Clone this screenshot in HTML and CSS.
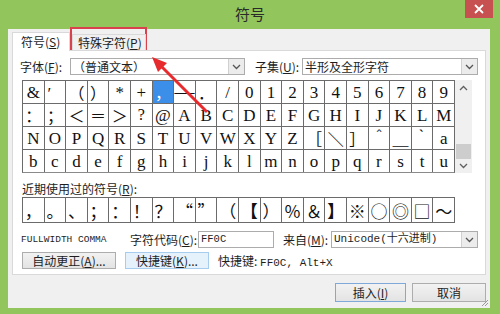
FILE: index.html
```html
<!DOCTYPE html>
<html lang="zh-CN">
<head>
    <meta charset="UTF-8">
    <meta name="viewport" content="width=device-width, initial-scale=1.0">
    <title>符号</title>
    <link rel="stylesheet" href="styles.css">
</head>
<body>
<div class="window">
    <div class="titlebar">
        <span></span>
        <span class="title">符号</span>
        <div class="close">
            <svg width="10" height="10" viewBox="0 0 10 10"><path d="M1 1L9 9M9 1L1 9" stroke="#fff" stroke-width="1.8"/></svg>
        </div>
    </div>

    <div class="dialog">
        <div class="tabs">
            <div class="tab active">符号(<u>S</u>)</div>
            <div class="tab">特殊字符(<u>P</u>)</div>
        </div>

        <div class="tab-panel">
            <div class="font-row">
                <span class="label font-label">字体(<u>F</u>):</span>
                <div class="select font-select">
                    <span class="select-text">（普通文本）</span>
                    <span class="drop"><svg width="9" height="6" viewBox="0 0 9 6"><path d="M1 1L4.5 4.5L8 1" fill="none" stroke="#555" stroke-width="1.3"/></svg></span>
                </div>
                <span class="label subset-label">子集(<u>U</u>):</span>
                <div class="select subset-select">
                    <span class="select-text">半形及全形字符</span>
                    <span class="drop"><svg width="9" height="6" viewBox="0 0 9 6"><path d="M1 1L4.5 4.5L8 1" fill="none" stroke="#555" stroke-width="1.3"/></svg></span>
                </div>
            </div>

            <div class="char-area">
                <div class="char-grid">
                    <div class="cell">&amp;</div>
                    <div class="cell l top">′</div>
                    <div class="cell cjk">（</div>
                    <div class="cell cjk">）</div>
                    <div class="cell">*</div>
                    <div class="cell">+</div>
                    <div class="cell cjk selected">，</div>
                    <div class="cell dash">—</div>
                    <div class="cell cjk">．</div>
                    <div class="cell">/</div>
                    <div class="cell">0</div>
                    <div class="cell">1</div>
                    <div class="cell">2</div>
                    <div class="cell">3</div>
                    <div class="cell">4</div>
                    <div class="cell">5</div>
                    <div class="cell">6</div>
                    <div class="cell">7</div>
                    <div class="cell">8</div>
                    <div class="cell">9</div>

                    <div class="cell cjk">：</div>
                    <div class="cell cjk">；</div>
                    <div class="cell cjk">＜</div>
                    <div class="cell cjk">＝</div>
                    <div class="cell cjk">＞</div>
                    <div class="cell small">?</div>
                    <div class="cell">@</div>
                    <div class="cell">A</div>
                    <div class="cell">B</div>
                    <div class="cell">C</div>
                    <div class="cell">D</div>
                    <div class="cell">E</div>
                    <div class="cell">F</div>
                    <div class="cell">G</div>
                    <div class="cell">H</div>
                    <div class="cell">I</div>
                    <div class="cell">J</div>
                    <div class="cell">K</div>
                    <div class="cell">L</div>
                    <div class="cell">M</div>

                    <div class="cell">N</div>
                    <div class="cell">O</div>
                    <div class="cell">P</div>
                    <div class="cell">Q</div>
                    <div class="cell">R</div>
                    <div class="cell">S</div>
                    <div class="cell">T</div>
                    <div class="cell">U</div>
                    <div class="cell">V</div>
                    <div class="cell">W</div>
                    <div class="cell">X</div>
                    <div class="cell">Y</div>
                    <div class="cell">Z</div>
                    <div class="cell cjk">［</div>
                    <div class="cell cjk">＼</div>
                    <div class="cell cjk">］</div>
                    <div class="cell cjk">＾</div>
                    <div class="cell cjk">＿</div>
                    <div class="cell cjk">｀</div>
                    <div class="cell">a</div>

                    <div class="cell">b</div>
                    <div class="cell">c</div>
                    <div class="cell">d</div>
                    <div class="cell">e</div>
                    <div class="cell">f</div>
                    <div class="cell">g</div>
                    <div class="cell">h</div>
                    <div class="cell">i</div>
                    <div class="cell">j</div>
                    <div class="cell">k</div>
                    <div class="cell">l</div>
                    <div class="cell">m</div>
                    <div class="cell">n</div>
                    <div class="cell">o</div>
                    <div class="cell">p</div>
                    <div class="cell">q</div>
                    <div class="cell">r</div>
                    <div class="cell">s</div>
                    <div class="cell">t</div>
                    <div class="cell">u</div>
                </div>
                <div class="scrollbar">
                    <svg width="9" height="6" viewBox="0 0 9 6"><path d="M1 5L4.5 1.5L8 5" fill="none" stroke="#606060" stroke-width="1.3"/></svg>
                    <div class="thumb"></div>
                    <svg width="9" height="6" viewBox="0 0 9 6"><path d="M1 1L4.5 4.5L8 1" fill="none" stroke="#606060" stroke-width="1.3"/></svg>
                </div>
            </div>

            <div class="recent-label">近期使用过的符号(<u>R</u>):</div>
            <div class="recent-grid">
                <div class="cell cjk">，</div>
                <div class="cell cjk">。</div>
                <div class="cell cjk">、</div>
                <div class="cell cjk">；</div>
                <div class="cell cjk">：</div>
                <div class="cell cjk">！</div>
                <div class="cell cjk">？</div>
                <div class="cell cjk">“</div>
                <div class="cell cjk">”</div>
                <div class="cell cjk">（</div>
                <div class="cell cjk bold">【</div>
                <div class="cell cjk">）</div>
                <div class="cell cjk">％</div>
                <div class="cell cjk">＆</div>
                <div class="cell cjk bold">】</div>
                <div class="cell cjk">※</div>
                <div class="cell cjk">○</div>
                <div class="cell cjk">◎</div>
                <div class="cell cjk">□</div>
                <div class="cell cjk">～</div>
            </div>

            <div class="info-row">
                <span class="char-name">FULLWIDTH COMMA</span>
                <span class="label code-label">字符代码(<u>C</u>):</span>
                <div class="input mono">FF0C</div>
                <span class="label from-label">来自(<u>M</u>):</span>
                <div class="select from-select">
                    <span class="select-text mono">Unicode(十六进制)</span>
                    <span class="drop"><svg width="9" height="6" viewBox="0 0 9 6"><path d="M1 1L4.5 4.5L8 1" fill="none" stroke="#555" stroke-width="1.3"/></svg></span>
                </div>
            </div>

            <div class="btn-row">
                <div class="btn autocorrect">自动更正(<u>A</u>)...</div>
                <div class="btn hot shortcut">快捷键(<u>K</u>)...</div>
                <span class="shortcut-text">快捷键: <span class="mono">FF0C, Alt+X</span></span>
            </div>
        </div>

        <div class="footer">
            <div class="btn default insert">插入(<u>I</u>)</div>
            <div class="btn cancel">取消</div>
        </div>

        <svg class="grip" width="8" height="8" viewBox="0 0 8 8">
            <path d="M7 1L1 7M7 4L4 7" stroke="#9a9a9a" stroke-width="1"/>
        </svg>
    </div>

    <div class="callout-box"></div>
    <svg class="arrow" width="500" height="314" viewBox="0 0 500 314">
        <line x1="207" y1="112" x2="160" y2="65" stroke="#e62a2e" stroke-width="3"/>
        <polygon points="152,57 167,63 158,72" fill="#e62a2e"/>
    </svg>
</div>
</body>
</html>
```

FILE: styles.css
```css
* {
    box-sizing: border-box;
}
body {
    margin: 0;
    width: 500px;
    height: 314px;
    overflow: hidden;
    background-color: #92c55b;
    font-family: "Noto Sans CJK SC", "Liberation Sans", sans-serif;
    font-size: 12px;
    color: #1e1e1e;
}
u {
    text-underline-offset: 1px;
}
.mono {
    font-family: "Liberation Mono", "Noto Sans CJK SC", monospace;
}
.window {
    position: relative;
    height: 314px;
}

/* title bar */
.titlebar {
    height: 29px;
    display: grid;
    grid-template-columns: 1fr auto 1fr;
    align-items: start;
}
.title {
    font-size: 15px;
    line-height: 28px;
    color: #2a2a2a;
}
.close {
    justify-self: end;
    margin-right: 7px;
    width: 28px;
    height: 18px;
    background: #c75050;
    display: flex;
    align-items: center;
    justify-content: center;
}

/* dialog body */
.dialog {
    position: relative;
    margin-left: 8px;
    width: 482px;
    height: 279px;
    background: #f0f0f0;
    padding: 3px 4px 0 4px;
}
.tabs {
    display: flex;
    align-items: flex-end;
    height: 19px;
    margin-bottom: -1px;
    position: relative;
    z-index: 1;
}
.tab {
    height: 16px;
    line-height: 15px;
    padding: 0 5px;
    border: 1px solid #d9d9d9;
    border-bottom: none;
    background: #f0f0f0;
    width: 74px;
    margin-left: 2px;
    margin-bottom: 1px;
    white-space: nowrap;
}
.tab.active {
    width: 58px;
    height: 19px;
    line-height: 18px;
    margin: 0;
    padding-left: 8px;
    background: #fff;
}
.tab-panel {
    height: 225px;
    background: #fff;
    border: 1px solid #d9d9d9;
    padding: 7px 7px 0 7px;
}

/* font + subset */
.font-row {
    display: flex;
    height: 17px;
    align-items: center;
}
.label {
    line-height: 17px;
    white-space: nowrap;
}
.font-label {
    width: 50px;
}
.subset-label {
    width: 47px;
    margin-left: 10px;
}
.select {
    height: 17px;
    border: 1px solid #acacac;
    background: #fff;
    display: flex;
    align-items: center;
    justify-content: space-between;
}
.select-text {
    padding-left: 2px;
    line-height: 15px;
}
.drop {
    width: 16px;
    height: 15px;
    background: #ececec;
    border-left: 1px solid #d0d0d0;
    display: flex;
    align-items: center;
    justify-content: center;
}
.font-select {
    width: 175px;
}
.subset-select {
    width: 176px;
}

/* character table */
.char-area {
    display: flex;
    margin: 5px 0 0 2px;
}
.char-grid, .recent-grid {
    width: 433px;
    display: grid;
    grid-template-columns: repeat(20, 1fr);
    gap: 1px;
    background: #6b6b6b;
    border: 1px solid #6b6b6b;
}
.char-grid {
    height: 93px;
    grid-template-rows: repeat(4, 1fr);
    border-bottom-color: #8a8a8a;
}
.cell {
    background: #fff;
    display: flex;
    align-items: center;
    justify-content: center;
    font-family: "Liberation Serif", serif;
    font-size: 17px;
    line-height: 1;
    color: #111;
    overflow: hidden;
}
.cell.cjk {
    font-family: "Noto Sans CJK SC", sans-serif;
    font-size: 16px;
}
.cell.l {
    justify-content: flex-start;
    padding-left: 3px;
}
.cell.top {
    align-items: flex-start;
    padding-top: 4px;
}
.cell.small {
    font-size: 16px;
}
.cell.dash {
    font-size: 20px;
}
.cell.bold {
    font-weight: 700;
}
.cell.selected {
    background: #3b8fe8;
    color: #fff;
}
.scrollbar {
    width: 17px;
    height: 93px;
    background: #f0f0f0;
    display: flex;
    flex-direction: column;
    align-items: center;
    justify-content: space-between;
    padding: 5px 0 4px;
}
.thumb {
    width: 15px;
    height: 15px;
    background: #cdcdcd;
    margin-top: auto;
    margin-bottom: 4px;
}

/* recently used */
.recent-label {
    margin: 8px 0 0 2px;
    height: 16px;
    line-height: 16px;
}
.recent-grid {
    height: 26px;
    margin-left: 2px;
}
.recent-grid .cell {
    font-size: 17px;
}

/* code info */
.info-row {
    display: flex;
    align-items: center;
    height: 17px;
    margin-top: 8px;
}
.char-name {
    font-family: "Liberation Mono", monospace;
    font-size: 9.5px;
    width: 109px;
    margin-left: 1px;
}
.code-label {
    width: 68px;
}
.input {
    width: 76px;
    height: 17px;
    border: 1px solid #acacac;
    padding-left: 2px;
    line-height: 15px;
    font-size: 10.5px;
}
.from-label {
    width: 48px;
    margin-left: 9px;
}
.from-select {
    width: 147px;
}
.from-select .select-text {
    font-size: 11px;
}

/* buttons */
.btn-row {
    display: flex;
    align-items: center;
    height: 17px;
    margin: 4px 0 0 2px;
    gap: 9px;
}
.btn {
    height: 17px;
    border: 1px solid #adadad;
    background: linear-gradient(#f2f2f2, #e3e3e3);
    display: flex;
    align-items: center;
    justify-content: center;
    line-height: 15px;
}
.btn.hot {
    background: #e5f1fb;
    border-color: #a6cdee;
}
.autocorrect {
    width: 94px;
}
.shortcut {
    width: 84px;
}
.shortcut-text .mono {
    font-size: 11px;
}
.footer {
    display: flex;
    justify-content: flex-end;
    gap: 6px;
    margin-top: 8px;
}
.footer .btn {
    height: 19px;
}
.insert {
    width: 71px;
    border-color: #7ea9d8;
}
.cancel {
    width: 74px;
}
.grip {
    position: absolute;
    right: 1px;
    bottom: 1px;
}

/* annotation overlay */
.callout-box {
    position: absolute;
    left: 70px;
    top: 27px;
    width: 77px;
    height: 23px;
    border: 2px solid #d9414c;
}
.arrow {
    position: absolute;
    left: 0;
    top: 0;
    pointer-events: none;
}
```
